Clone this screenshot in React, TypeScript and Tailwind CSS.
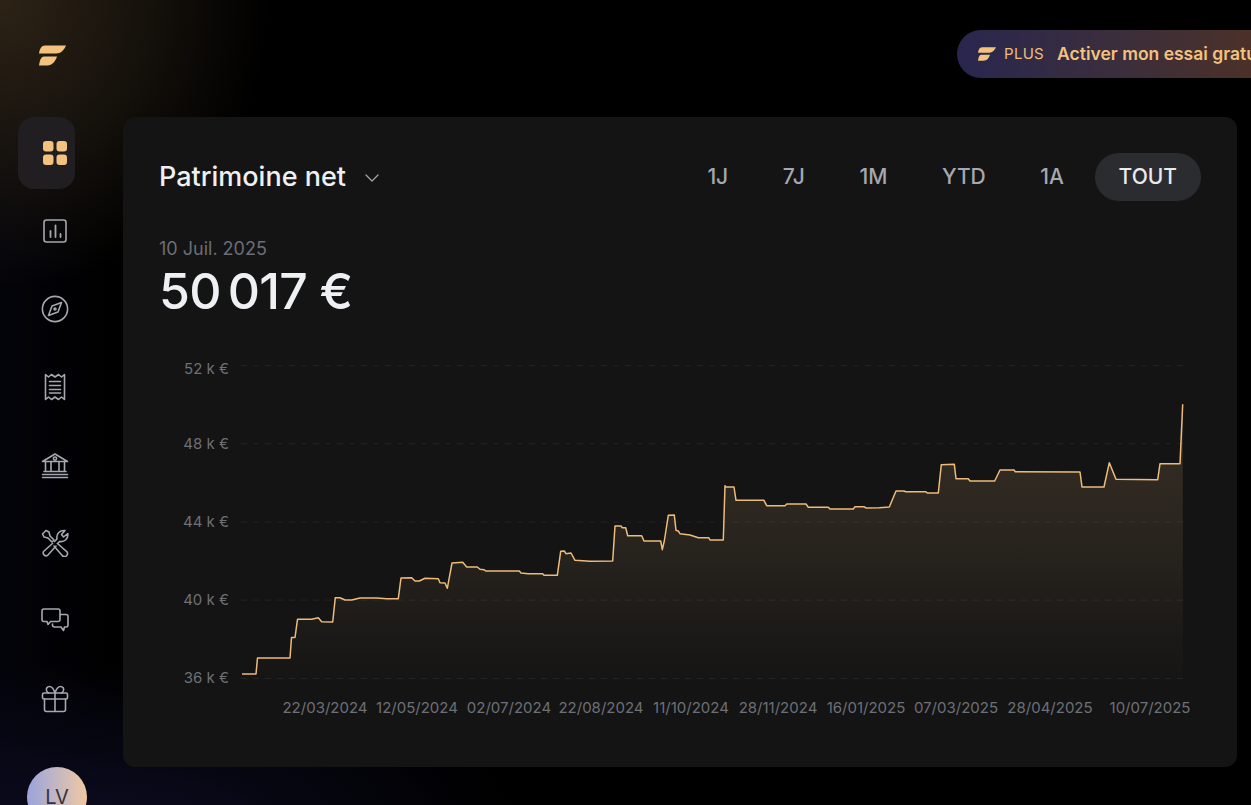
import { ChevronDown } from "lucide-react";
import type { ReactNode } from "react";

const RANGES = ["1J", "7J", "1M", "YTD", "1A", "TOUT"];

const Y_TICKS = [
  { label: "52 k €", lineY: 364.7, textY: 373 },
  { label: "48 k €", lineY: 442.7, textY: 448 },
  { label: "44 k €", lineY: 520.9, textY: 526 },
  { label: "40 k €", lineY: 599.1, textY: 604 },
  { label: "36 k €", lineY: 677.4, textY: 682 },
];

const X_TICKS = [
  { label: "22/03/2024", x: 325 },
  { label: "12/05/2024", x: 417 },
  { label: "02/07/2024", x: 509 },
  { label: "22/08/2024", x: 601 },
  { label: "11/10/2024", x: 691 },
  { label: "28/11/2024", x: 778 },
  { label: "16/01/2025", x: 866 },
  { label: "07/03/2025", x: 956 },
  { label: "28/04/2025", x: 1050 },
  { label: "10/07/2025", x: 1150 },
];

// traced by hand from the reference, in page coordinates
const LINE =
  "M242 673 L256 673 L257.5 657 L290 657 L291.5 636.5 L295 636.5 L297.5 618.3 L311.7 618.3 L318.3 616.7 L321.7 620.7 L332.7 621 L335.3 596.7 L340 596.7 L345 599 L351.7 599 L360 597 L376.7 597 L386.7 597.7 L398.3 597.7 L401 577 L411.7 576.7 L415 580 L419.3 580 L425 577.3 L438.3 577.7 L440 581.7 L445 582 L447.3 587.3 L452 562 L462.7 561.3 L466.7 566 L477.3 566 L480 568.3 L484 568.7 L485.7 570 L519.3 570 L521 572 L528.3 572.7 L542.7 572.7 L544 574.3 L557.3 574.3 L560.7 550.3 L564.3 550 L566 552.7 L571 552 L575 559.3 L590 560.3 L612.7 560 L615 525 L621 525 L622.3 526.7 L625.7 526.7 L627.7 534.7 L641.7 534.7 L644 540 L660.7 540 L662.3 548.7 L664.3 540 L668.3 514.3 L674.3 514 L676 529.3 L678.3 530 L680 532.7 L690 534 L698.3 536.7 L708.7 536.7 L710 539 L723.3 539 L725 484.7 L726 486 L734 486 L736 499.3 L764 499.3 L766.7 504.7 L785 504.7 L786.7 503 L806 503 L808.3 506.3 L828.3 506.3 L830 508 L853.3 508 L855 505.7 L864 505.7 L866 507 L879.3 506.7 L889.3 506 L896 490 L904 490 L905.7 490.7 L925.7 490.7 L927.3 492 L938.3 492 L941.3 463.7 L954.3 463.3 L956 477.7 L968.3 477.7 L970 480 L994.7 480 L1000 469 L1014 469 L1015.3 470.7 L1080 471 L1082 486 L1104 486 L1109.3 461.7 L1116 478.3 L1157.7 478.7 L1160 462.7 L1180 462.7 L1182.7 403.3";

function LogoMark({ className }: { className: string }) {
  return (
    <svg viewBox="0 0 27 21" className={className} fill="currentColor">
      <path d="M6 0.5 H27 C25 5 22 8.5 17 8.5 H0 C0.6 4 2.5 0.5 6 0.5 Z" />
      <path d="M5 11.5 H18 C16.5 16 13.5 20.5 8 20.5 H0 C0.6 16 1.8 11.5 5 11.5 Z" />
    </svg>
  );
}

function Stroke({ children }: { children: ReactNode }) {
  return (
    <svg
      viewBox="0 0 28 28"
      className="w-7 h-7 text-[#a5a8ae]"
      fill="none"
      stroke="currentColor"
      strokeWidth="1.6"
      strokeLinecap="round"
      strokeLinejoin="round"
    >
      {children}
    </svg>
  );
}

function NavIcons() {
  return [
    <svg key="grid" viewBox="0 0 28 28" className="w-7 h-7 ml-[16px] text-[#f3c27f]" fill="currentColor">
      <rect x="2" y="2" width="10.5" height="10.5" rx="3" />
      <rect x="15.5" y="2" width="10.5" height="10.5" rx="3" />
      <rect x="2" y="15.5" width="10.5" height="10.5" rx="3" />
      <rect x="15.5" y="15.5" width="10.5" height="10.5" rx="3" />
    </svg>,
    <Stroke key="chart">
      <rect x="3" y="3" width="22" height="22" rx="2.5" />
      <path d="M9.5 20 V14 M14.5 20 V8.5 M19.5 20 V17" strokeWidth="1.8" />
    </Stroke>,
    <Stroke key="compass">
      <circle cx="14" cy="14" r="12.6" />
      <path d="M20.5 7.5 L17 17 L7.5 20.5 L11 11 Z" />
      <circle cx="14" cy="14" r="1" />
    </Stroke>,
    <Stroke key="receipt">
      <path d="M4.5 1.5 L7.5 4 L10.5 1.5 L14 4 L17.5 1.5 L20.5 4 L23.5 1.5 V26.5 L20.5 24 L17.5 26.5 L14 24 L10.5 26.5 L7.5 24 L4.5 26.5 Z" />
      <path d="M8.5 8.5 H19.5 M8.5 12.5 H19.5 M8.5 16.5 H19.5 M8.5 20 H19.5" />
    </Stroke>,
    <Stroke key="bank">
      <path d="M1.5 10.5 L14 3 L26.5 10.5 Z" />
      <circle cx="14" cy="7.6" r="1.6" />
      <path d="M4.5 10.5 V20 M10 10.5 V20 M18 10.5 V20 M23.5 10.5 V20 M3 20.5 H25 M1.5 23.5 H26.5 M1.5 26.5 H26.5" />
    </Stroke>,
    <Stroke key="tools">
      <path d="M1.5 5 L5 1.5 L8 3 L9 7 L13 11 L11 13 L7 9 L3 8 Z" />
      <path d="M11.5 14.5 L2.5 22.5 A3 3 0 0 0 6.5 26.5 L15 17" />
      <path d="M13.5 12.5 L16 10 C15 4.5 19 1 24 1.5 L20.5 5.5 L22.5 8 L26.8 4.5 C27.5 9.5 23.5 13.5 18.5 12.5 L16.5 14.5" />
      <path d="M16.5 14.5 L26 22.8 A3.1 3.1 0 0 1 21.6 27 L13 17" />
    </Stroke>,
    <Stroke key="chat">
      <path d="M3 2 H17 A2 2 0 0 1 19 4 V12.5 A2 2 0 0 1 17 14.5 H9.5 L7 17.5 L6 14.5 H3 A2 2 0 0 1 1 12.5 V4 A2 2 0 0 1 3 2 Z" />
      <path d="M19 7.5 H25 A2 2 0 0 1 27 9.5 V18 A2 2 0 0 1 25 20 H23.5 L22.5 23.5 L20 20 H13.5 A2 2 0 0 1 11.5 18 V17" />
    </Stroke>,
    <Stroke key="gift">
      <rect x="1.5" y="8" width="25" height="6" rx="1.5" />
      <path d="M3.5 14 V24.5 A2 2 0 0 0 5.5 26.5 H22.5 A2 2 0 0 0 24.5 24.5 V14 M14 8 V26.5" />
      <path d="M14 8 C12.5 3.5 10.5 1.5 8.5 1.5 C6 1.5 5 3.5 5.5 5.5 C6 7 7 8 8 8 M14 8 C15.5 3.5 17.5 1.5 19.5 1.5 C22 1.5 23 3.5 22.5 5.5 C22 7 21 8 20 8" />
    </Stroke>,
  ];
}

function Sidebar() {
  return (
    <aside className="w-[123px] shrink-0 flex flex-col">
      <div className="h-[117px] shrink-0 pl-[39px] pt-[45px]">
        <LogoMark className="w-[27px] h-[21px] text-[#f3c27f]" />
      </div>
      <nav className="flex flex-col shrink-0 gap-[6px] pl-[18px]">
        {NavIcons().map((icon, i) => (
          <div
            key={i}
            className={
              "w-[57px] h-[72px] rounded-2xl flex items-center justify-center " +
              (i === 0 ? "bg-[#201e21]" : "pl-[16px]")
            }
          >
            {icon}
          </div>
        ))}
      </nav>
      <div className="mt-[32px] ml-[27px] w-[60px] h-[60px] shrink-0 rounded-full bg-gradient-to-r from-[#9aa3dc] to-[#f0c8a0] flex items-center justify-center text-[20px] text-[#34343c]">
        LV
      </div>
    </aside>
  );
}

function PlusBanner() {
  return (
    <header className="h-[117px] shrink-0 pt-[30px] pl-[834px]">
      <div className="w-[420px] h-[48px] rounded-l-full flex items-center pl-[21px] whitespace-nowrap bg-gradient-to-r from-[#29264f] to-[#5a3208] text-[#f3c27f]">
        <LogoMark className="w-[18px] h-[14px]" />
        <span className="ml-2 text-[15px] tracking-[0.02em] text-[#eebd7c]">PLUS</span>
        <span className="ml-[13px] text-[17.5px] font-semibold">Activer mon essai gratuit</span>
      </div>
    </header>
  );
}

function NetWorthChart() {
  return (
    <svg viewBox="123 350 1114 380" className="block w-[1114px] h-[380px] -ml-[36px] mt-[32px]">
      <defs>
        <linearGradient id="area" x1="0" y1="403" x2="0" y2="680" gradientUnits="userSpaceOnUse">
          <stop offset="0" stopColor="#f3c27f" stopOpacity="0.16" />
          <stop offset="0.5" stopColor="#f3c27f" stopOpacity="0.09" />
          <stop offset="1" stopColor="#f3c27f" stopOpacity="0.005" />
        </linearGradient>
      </defs>
      {Y_TICKS.map((t) => (
        <g key={t.label}>
          <line x1="241" x2="1184" y1={t.lineY} y2={t.lineY} stroke="#242424" strokeDasharray="6 6" />
          <text x="229" y={t.textY} textAnchor="end" fontSize="15" fill="#6e7077">
            {t.label}
          </text>
        </g>
      ))}
      <path d={`${LINE} L1183 680 L242 680 Z`} fill="url(#area)" />
      <path d={LINE} fill="none" stroke="#eebb7c" strokeWidth="1.5" strokeLinejoin="round" />
      {X_TICKS.map((t) => (
        <text key={t.label} x={t.x} y="712" textAnchor="middle" fontSize="15" fill="#6e7077">
          {t.label}
        </text>
      ))}
    </svg>
  );
}

export default function App() {
  return (
    <div className="w-screen h-screen overflow-hidden flex bg-black font-['Inter',sans-serif] bg-[radial-gradient(ellipse_270px_290px_at_0px_0px,#2d2316_0%,rgba(30,24,16,0.7)_55%,transparent_100%),radial-gradient(ellipse_420px_170px_at_100px_830px,#0c0c22_0%,transparent_100%),linear-gradient(90deg,#03030a_0%,#000_110px)]">
      <Sidebar />
      <main className="flex-1 min-w-0 pr-[14px] flex flex-col">
        <PlusBanner />
        <section className="h-[650px] w-[1114px] shrink-0 rounded-xl bg-[#141414] pt-[36px] pl-[36px] pr-[36px]">
          <div className="flex items-center justify-between h-[48px]">
            <div className="flex items-center gap-[14px]">
              <h1 className="text-[27px] font-medium text-[#eef0f4]">Patrimoine net</h1>
              <ChevronDown className="w-[24px] h-[24px] text-[#a5a8ae] mt-[2px]" strokeWidth={1.2} />
            </div>
            <div className="flex items-center gap-[6.6px] text-[21px] font-medium text-[#a5a8ae]">
              {RANGES.map((r) => (
                <button
                  key={r}
                  className={"h-[48px] px-6 rounded-full " + (r === "TOUT" ? "bg-[#2b2c30] text-[#e9eaec]" : "")}
                >
                  {r}
                </button>
              ))}
            </div>
          </div>
          <p className="mt-[34px] text-[18px] leading-[27px] text-[#6b6e76]">10 Juil. 2025</p>
          <p className="mt-[1px] text-[50px] leading-[56px] font-medium text-[#eef0f4] tracking-[-0.015em]">
            50<span className="ml-[7px]">017</span> €
          </p>
          <NetWorthChart />
        </section>
      </main>
    </div>
  );
}
